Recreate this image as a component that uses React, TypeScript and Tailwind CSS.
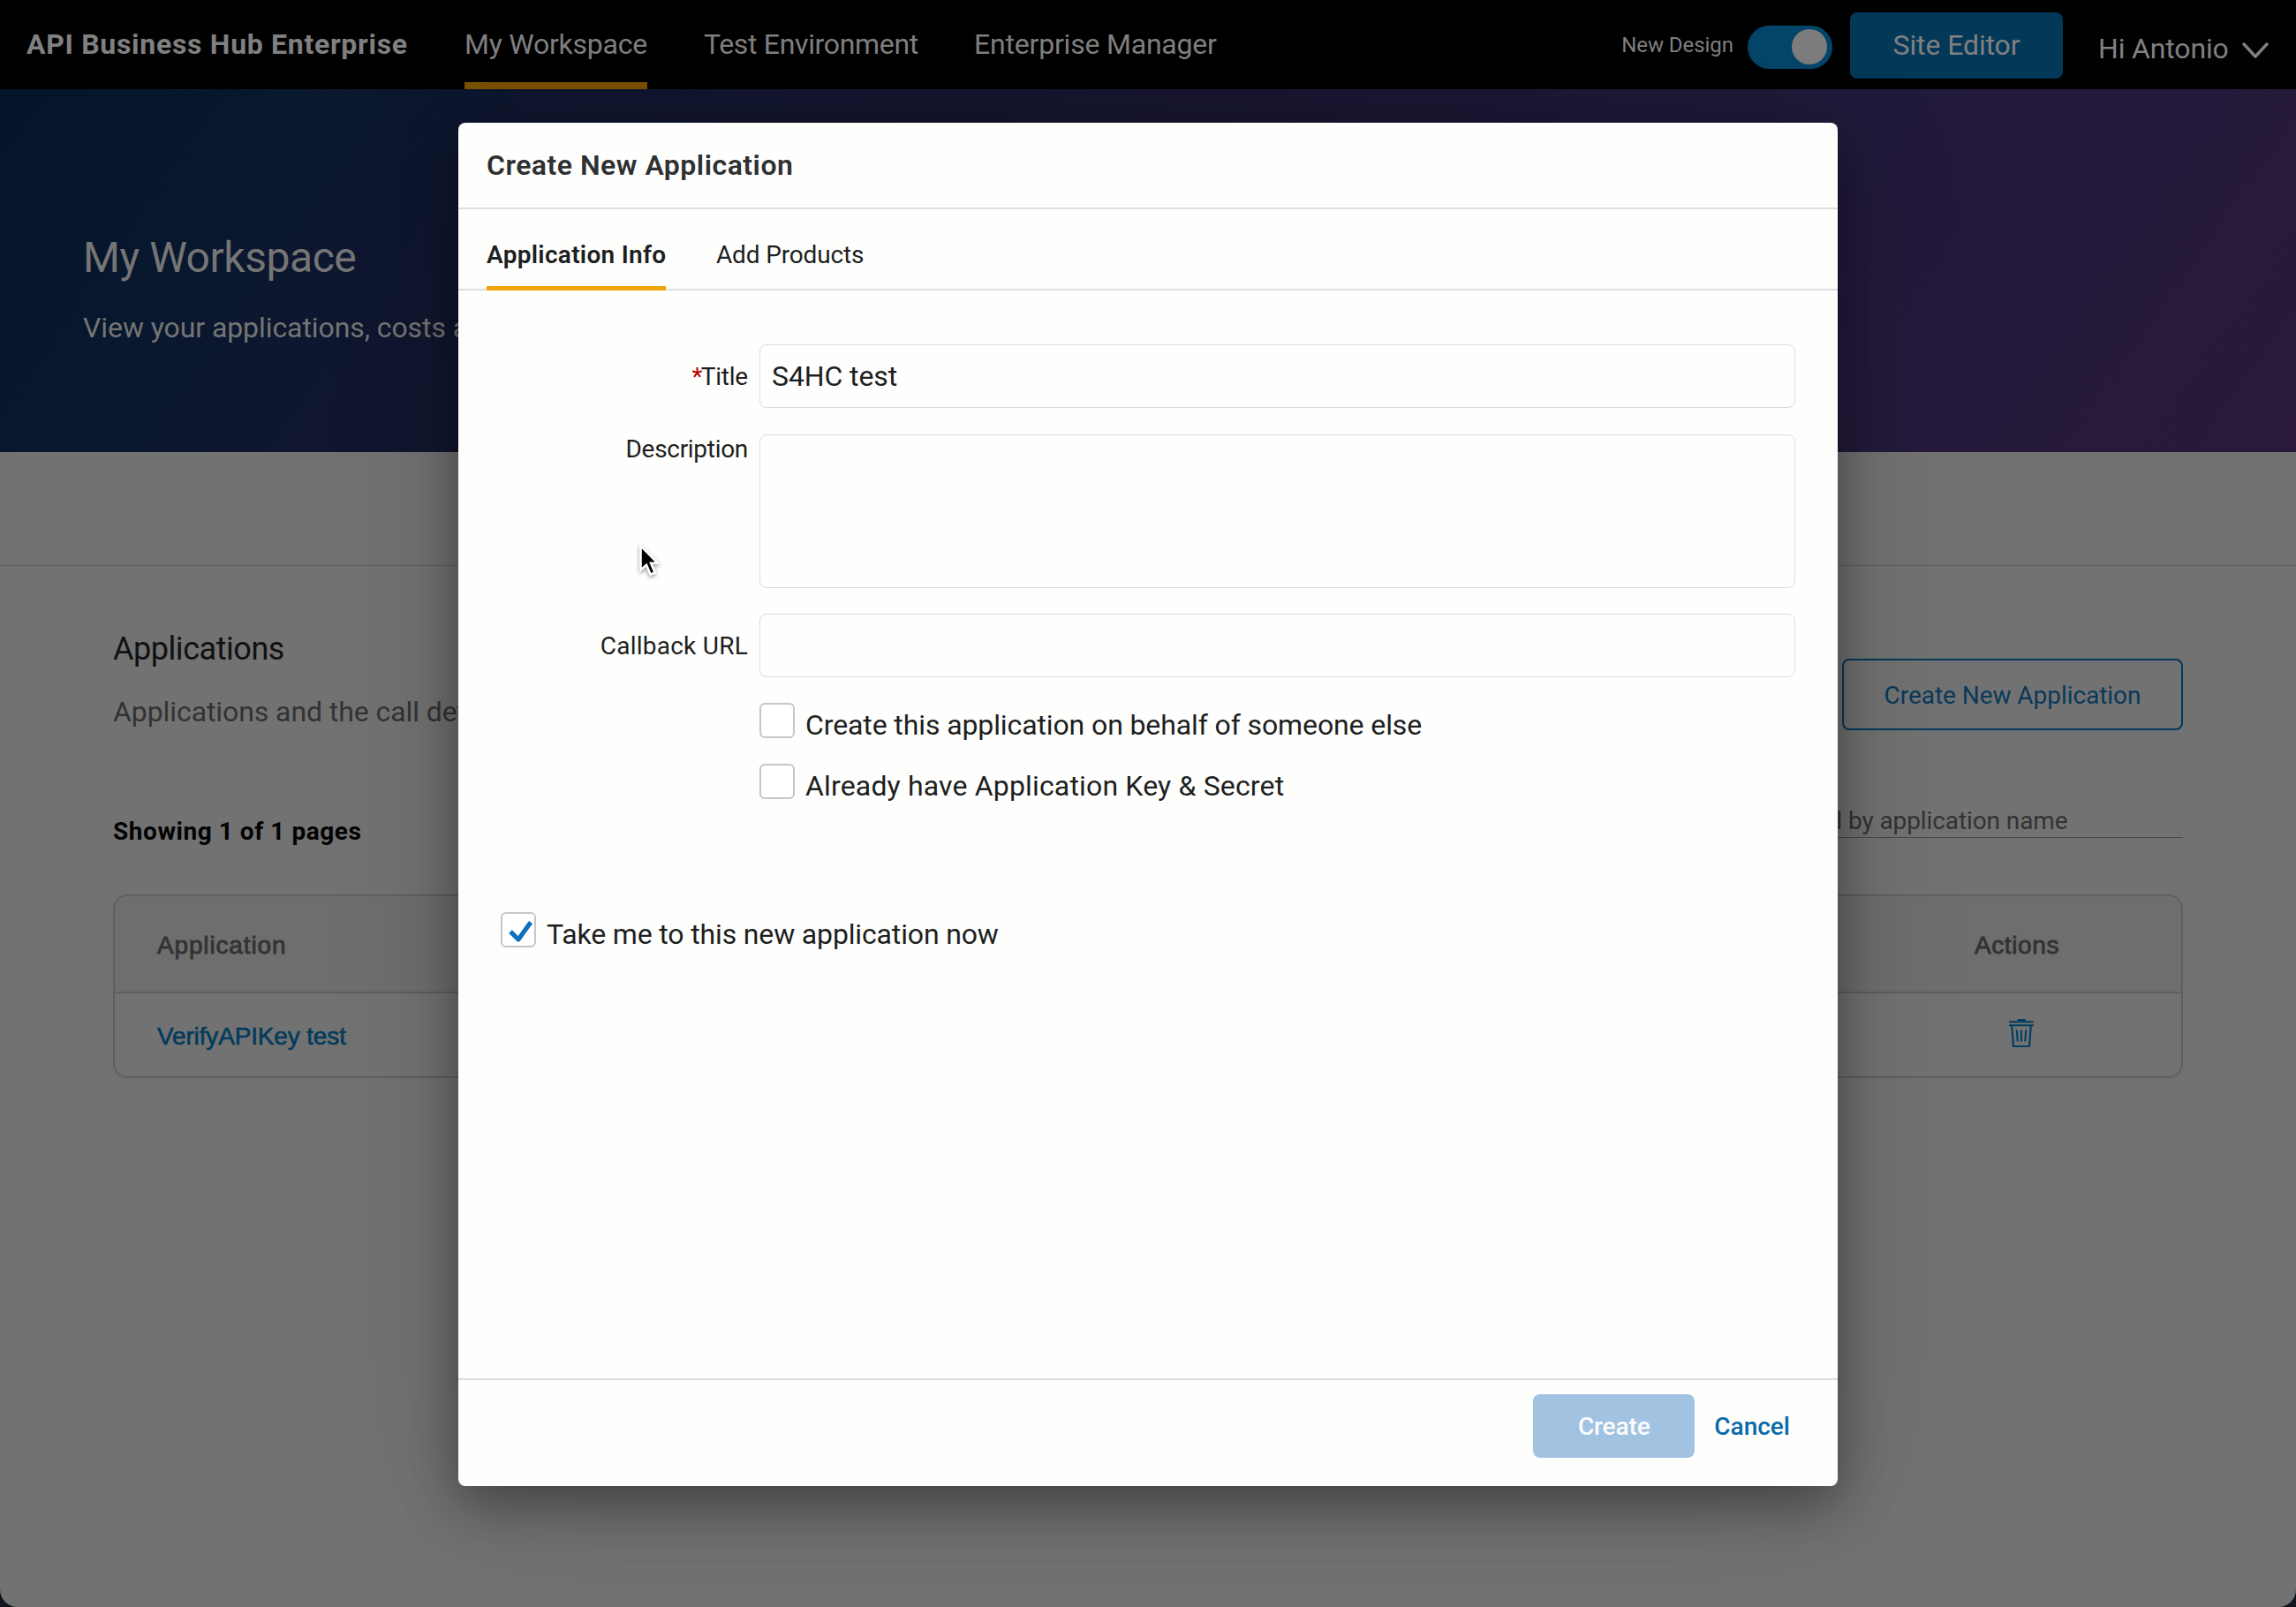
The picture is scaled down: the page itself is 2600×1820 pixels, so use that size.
import type { ReactNode } from "react";

function TopBar() {
  return (
    <header className="flex h-[101px] items-center bg-[#010102] pl-[30px] text-[32px] text-[#808080]">
      <div className="w-[496px] pb-[2px] font-bold tracking-[0.7px]">API Business Hub Enterprise</div>
      <nav className="flex h-full gap-[64px]">
        <a className="flex h-full w-[207px] items-center border-b-8 border-[#7a5200] pt-[6px] tracking-[-0.25px] whitespace-nowrap">
          My Workspace
        </a>
        <a className="flex h-full w-[242px] items-center pb-[2px] tracking-[-0.33px] whitespace-nowrap">
          Test Environment
        </a>
        <a className="flex h-full items-center pb-[2px] tracking-[-0.2px] whitespace-nowrap">Enterprise Manager</a>
      </nav>
      <div className="ml-auto flex h-full items-center">
        <span className="mr-[16px] text-2xl tracking-[-0.05px] text-[#808080]">New Design</span>
        <span className="mt-[5px] flex h-[49px] w-[96px] items-center justify-end rounded-full bg-[#04456a] pr-[6px]">
          <span className="size-10 rounded-full bg-[#7d7d7d]" />
        </span>
        <button className="mt-[2px] ml-[20px] h-[75px] w-[241px] rounded-lg bg-[#033858] pb-[2px] tracking-[-0.1px] text-[#808080]">
          Site Editor
        </button>
        <span className="mt-[8px] ml-[40px] w-[147px] tracking-[-0.15px] whitespace-nowrap">Hi Antonio</span>
        <svg className="mt-[13px] mr-[31px] ml-[16px]" width="30" height="20" viewBox="0 0 30 20" fill="none">
          <path d="M2 3 L15 17 L28 3" stroke="#808080" strokeWidth="3.4" strokeLinecap="round" strokeLinejoin="round" />
        </svg>
      </div>
    </header>
  );
}

function Hero() {
  return (
    <section className="h-[411px] bg-[linear-gradient(125deg,#041429_0%,#07182e_10%,#10162f_22%,#17162f_46%,#211a3b_72%,#251a3b_87%,#2a193a_100%)] pt-[161px] pl-[94px] text-[#757575]">
      <h1 className="text-5xl leading-[60px] tracking-[-0.45px]">My Workspace</h1>
      <p className="mt-[29px] text-[32px] leading-[40px] tracking-[-0.08px]">
        View your applications, costs and analytics
      </p>
    </section>
  );
}

function TrashIcon() {
  return (
    <svg width="28" height="32" viewBox="0 0 28 32" fill="none" stroke="#033d61">
      <path d="M9 2.5 Q9 0 11.5 0 H17 Q19.5 0 19.5 2.5 Z" fill="#033d61" stroke="none" />
      <path d="M0 3.3 H28 M0 7.2 H28" strokeWidth="2.1" />
      <path d="M3.2 7.5 L5 31 H23 L24.8 7.5" strokeWidth="2.2" />
      <path d="M8.8 12.5 L9.8 25.5 M14 12.5 V25.5 M19.2 12.5 L18.2 25.5" strokeWidth="2.1" />
    </svg>
  );
}

function ApplicationsPage() {
  return (
    <section>
      <div className="h-[129px] border-b border-[#5e5e5e]" />
      <div className="pt-[72px] pr-[128px] pl-[128px]">
        <div className="flex items-end justify-between">
          <div>
            <h2 className="text-[36px] leading-[44px] tracking-[-0.45px] text-[#0f1112]">Applications</h2>
            <p className="mt-[29px] pb-px text-[32px] leading-[40px] tracking-[-0.08px] text-[#333]">
              Applications and the call details
            </p>
          </div>
          <button className="h-[81px] w-[386px] rounded-lg border-2 border-[#03395a] pt-[2px] text-[28px] tracking-[-0.05px] text-[#08395a]">
            Create New Application
          </button>
        </div>
        <div className="mt-[84px] flex h-[38px] justify-between">
          <p className="pt-[13px] text-[28px] leading-[36px] font-bold tracking-[0.55px] text-[#020202]">
            Showing 1 of 1 pages
          </p>
          <div className="w-[446px] border-b border-[#4a4a4a] pt-px text-[28px] leading-[36px] tracking-[-0.1px] whitespace-nowrap text-[#333]">
            <span className="inline-block w-[67px] pr-[7px] text-right">Find</span>by application name
          </div>
        </div>
        <div className="mt-[64px] rounded-2xl border-2 border-[#5f5f5f] font-['Liberation_Sans',sans-serif] text-[28px]">
          <div className="flex h-[110px] items-center justify-between rounded-t-[14px] border-b-2 border-[#5f5f5f] bg-[#6e6e6e] pt-[3px] pl-[48px] text-[#333] [-webkit-text-stroke:0.9px_#333]">
            <span className="tracking-[0.85px]">Application</span>
            <span className="w-[374px] pl-[2px] text-center tracking-[0.6px]">Actions</span>
          </div>
          <div className="flex h-[94px] items-center justify-between pl-[48px]">
            <span className="pt-[3px] tracking-[-0.15px] text-[#033a5c] [-webkit-text-stroke:0.6px_#033a5c]">
              VerifyAPIKey test
            </span>
            <span className="flex w-[374px] justify-center pb-1 pl-[12px]">
              <TrashIcon />
            </span>
          </div>
        </div>
      </div>
    </section>
  );
}

function Checkbox({ checked }: { checked?: boolean }) {
  return (
    <span className="flex size-10 shrink-0 items-center justify-center rounded-[6px] border-2 border-[#c6c6c8] bg-white">
      {checked && (
        <svg width="36" height="36" viewBox="0 0 36 36" fill="none">
          <path d="M9 20.2 L18 29 L32 9.4" stroke="#0c6fbf" strokeWidth="5.2" strokeLinejoin="round" />
        </svg>
      )}
    </span>
  );
}

function CheckRow({ checked, children }: { checked?: boolean; children: ReactNode }) {
  return (
    <label className="flex h-10">
      <Checkbox checked={checked} />
      <span className="mt-[5px] ml-[12px] text-[32px] leading-[40px] whitespace-nowrap">{children}</span>
    </label>
  );
}

function Pointer() {
  return (
    <svg
      className="absolute top-[476px] left-[203px] drop-shadow-[0_2px_2px_rgba(0,0,0,0.4)]"
      width="28"
      height="42"
      viewBox="0 0 28 42"
    >
      <path
        d="M3.5 3 V30.5 L10 24.8 L14.6 35.6 L19.6 33.5 L15.1 22.8 H22.8 Z"
        fill="#000"
        stroke="#fff"
        strokeWidth="2.6"
      />
    </svg>
  );
}

const field = "w-[1173px] rounded-lg border border-[#dcdcde] bg-[#fefefe]";
const label = "w-[341px] pr-[13px] text-right text-[28px] whitespace-nowrap";

function Dialog() {
  return (
    <div className="relative flex h-[1544px] w-[1562px] flex-col rounded-lg bg-[#fefefd] text-[#1d1f21] shadow-[0_20px_60px_rgba(0,0,0,0.38),0_10px_160px_rgba(0,0,0,0.12)]">
      <h2 className="h-[98px] border-b-2 border-[#dedede] pl-[32px] text-[32px] leading-[97px] font-semibold tracking-[0.5px] text-[#2e3032]">
        Create New Application
      </h2>
      <div className="flex h-[92px] border-b-2 border-[#dedede] pl-[32px] text-[28px] leading-[103px]">
        <span className="h-[92px] w-[203px] border-b-[5px] border-[#eea300] font-semibold tracking-[0.3px] whitespace-nowrap">
          Application Info
        </span>
        <span className="ml-[57px] tracking-[-0.15px]">Add Products</span>
      </div>

      <div className="grow pt-[61px]">
        <div className="flex items-center">
          <span className={`${label} pt-[2px]`}>
            <span className="mr-[-2px] text-[#b00000]">*</span>
            <span className="tracking-[-0.2px]">Title</span>
          </span>
          <span className={`${field} flex h-[72px] items-center pl-[13px] text-[32px] tracking-[-0.1px]`}>
            S4HC test
          </span>
        </div>
        <div className="mt-[30px] flex">
          <span className={`${label} pt-px leading-8 tracking-[-0.3px]`}>Description</span>
          <span className={`${field} h-[174px]`} />
        </div>
        <div className="mt-[29px] flex items-center">
          <span className={`${label} pt-[2px] tracking-[0.25px]`}>Callback URL</span>
          <span className={`${field} h-[72px]`} />
        </div>
        <div className="mt-[29px] flex flex-col gap-[29px] pl-[341px]">
          <CheckRow>
            <span className="tracking-[-0.11px]">Create this application on behalf of someone else</span>
          </CheckRow>
          <CheckRow>
            <span className="tracking-[0.16px]">Already have Application Key &amp; Secret</span>
          </CheckRow>
        </div>
        <div className="mt-[128px] pl-[48px]">
          <CheckRow checked>
            <span className="tracking-[-0.15px]">Take me to this new application now</span>
          </CheckRow>
        </div>
      </div>

      <div className="flex h-[122px] justify-end border-t-2 border-[#dedede] pt-4 pr-[54px] text-[28px]">
        <button className="h-[72px] w-[183px] rounded-lg bg-[#a1c3e1] pt-px font-medium tracking-[-0.1px] text-[#fbfcfd]">
          Create
        </button>
        <button className="ml-[22px] h-[72px] pt-px font-medium text-[#0a6ba8]">Cancel</button>
      </div>
      <Pointer />
    </div>
  );
}

export default function App() {
  return (
    <div className="h-[1820px] w-[2600px] overflow-hidden bg-[#10161c] font-['Roboto',sans-serif]">
      <div className="relative h-full overflow-hidden rounded-b-[20px] bg-[#727272]">
        <TopBar />
        <Hero />
        <ApplicationsPage />
        <div className="absolute inset-0 flex justify-center pt-[139px]">
          <Dialog />
        </div>
      </div>
    </div>
  );
}
